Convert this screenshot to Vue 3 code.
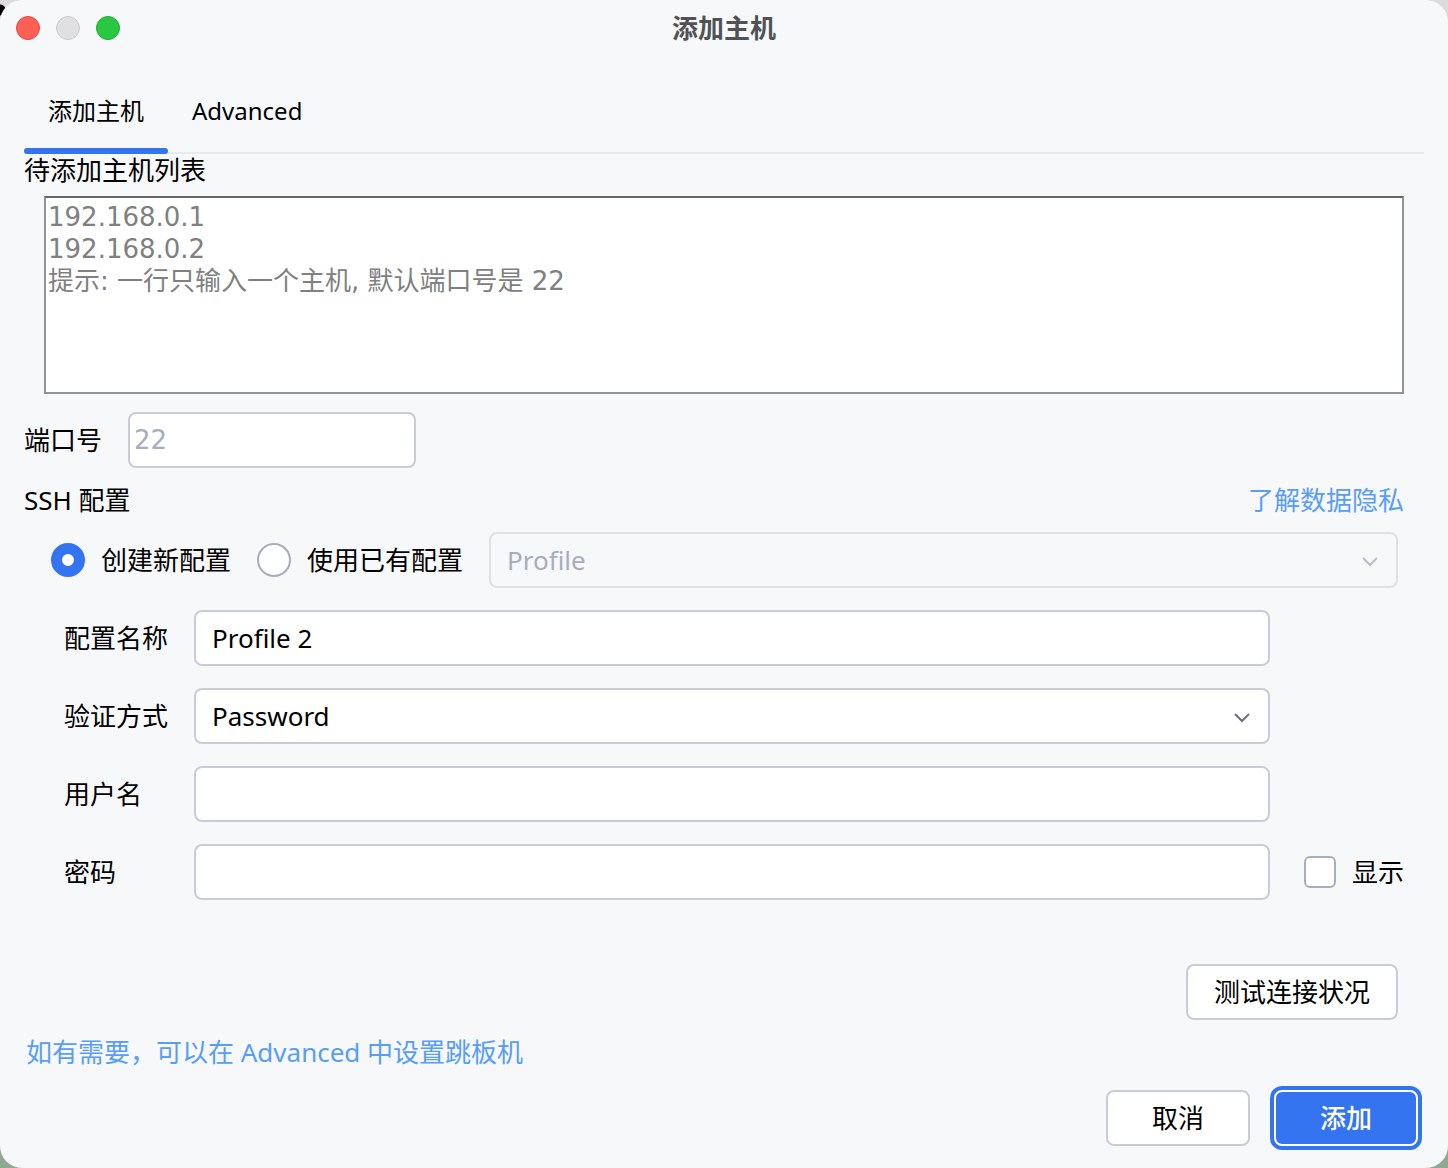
<script setup>
import { ref } from 'vue'

const hosts = ref('')
const hostHint = '192.168.0.1\n192.168.0.2\n提示: 一行只输入一个主机, 默认端口号是 22'
const port = ref('')
const mode = ref('new')
const profileName = ref('Profile 2')
const authMethod = ref('Password')
const username = ref('')
const password = ref('')
const showPassword = ref(false)
</script>

<template>
  <form class="window" @submit.prevent>
    <header class="titlebar">
      <div class="lights">
        <button type="button" class="light close" aria-label="关闭"></button>
        <button type="button" class="light minimize" aria-label="最小化" disabled></button>
        <button type="button" class="light maximize" aria-label="最大化"></button>
      </div>
      <h1 class="title">添加主机</h1>
    </header>

    <main class="content">
      <nav class="tabs" role="tablist">
        <button type="button" class="tab active" role="tab" aria-selected="true">添加主机</button>
        <button type="button" class="tab" role="tab" aria-selected="false">Advanced</button>
      </nav>

      <label class="list-label" for="hosts">待添加主机列表</label>
      <textarea id="hosts" v-model="hosts" class="hosts" :placeholder="hostHint"></textarea>

      <div class="port-row">
        <label for="port">端口号</label>
        <input id="port" v-model="port" class="field port" type="text" placeholder="22" />
      </div>

      <div class="section-row">
        <h2 class="section-title">SSH 配置</h2>
        <a class="link" href="#privacy">了解数据隐私</a>
      </div>

      <div class="mode-row">
        <label class="choice">
          <input v-model="mode" class="radio" type="radio" name="mode" value="new" />
          <span>创建新配置</span>
        </label>
        <label class="choice">
          <input v-model="mode" class="radio" type="radio" name="mode" value="existing" />
          <span>使用已有配置</span>
        </label>
        <div class="select-wrap">
          <select class="field" aria-label="已有配置" :disabled="mode === 'new'">
            <option>Profile</option>
          </select>
          <svg class="chevron" viewBox="0 0 18 12" aria-hidden="true"><path d="M2 2 L9 9 L16 2" /></svg>
        </div>
      </div>

      <div class="fields">
        <div class="row">
          <label for="name">配置名称</label>
          <input id="name" v-model="profileName" class="field" type="text" />
        </div>
        <div class="row">
          <label for="auth">验证方式</label>
          <div class="select-wrap">
            <select id="auth" v-model="authMethod" class="field">
              <option>Password</option>
            </select>
            <svg class="chevron" viewBox="0 0 18 12" aria-hidden="true"><path d="M2 2 L9 9 L16 2" /></svg>
          </div>
        </div>
        <div class="row">
          <label for="user">用户名</label>
          <input id="user" v-model="username" class="field" type="text" />
        </div>
        <div class="row">
          <label for="pass">密码</label>
          <input id="pass" v-model="password" class="field" :type="showPassword ? 'text' : 'password'" />
          <label class="show">
            <input v-model="showPassword" class="checkbox" type="checkbox" />
            <span>显示</span>
          </label>
        </div>
      </div>

      <div class="test-row">
        <button type="button" class="button">测试连接状况</button>
      </div>
      <a class="link jump" href="#advanced">如有需要，可以在 Advanced 中设置跳板机</a>
    </main>

    <footer class="actions">
      <button type="button" class="button">取消</button>
      <button type="submit" class="button primary">添加</button>
    </footer>
  </form>
</template>

<style>
body {
  margin: 0;
  background:
    radial-gradient(circle at 0 10px, #000 5px, transparent 6px),
    linear-gradient(#dcdcde 50%, #8fa892 50%);
}
</style>

<style scoped>
.window {
  box-sizing: border-box;
  min-height: 100vh;
  padding-bottom: 22px;
  display: flex;
  flex-direction: column;
  border-radius: 22px;
  background: #f7f8fa;
  color: #000;
  font: 26px/32px "Noto Sans", "Noto Sans CJK SC", sans-serif;
}
.window *,
.window *::before {
  box-sizing: border-box;
}
button,
input,
select,
textarea {
  margin: 0;
  font: inherit;
  color: inherit;
}
.titlebar {
  display: grid;
  grid-template-columns: 1fr auto 1fr;
  align-items: center;
  height: 56px;
  padding: 0 16px;
}
.lights {
  display: flex;
  gap: 16px;
}
.light {
  width: 24px;
  height: 24px;
  padding: 0;
  border: 1px solid;
  border-radius: 50%;
}
.close {
  background: #ff5f57;
  border-color: #e14942;
}
.minimize {
  background: #e0e0e2;
  border-color: #cbcbcd;
}
.maximize {
  background: #28c840;
  border-color: #1fa834;
}
.title {
  margin: 0;
  font-size: 26px;
  font-weight: 700;
  color: #515254;
}
.content {
  display: flex;
  flex-direction: column;
  padding: 14px 24px 0;
}
.tabs {
  display: flex;
  height: 84px;
  background: linear-gradient(#e9eaee, #e9eaee) bottom / 100% 2px no-repeat;
}
.tab {
  padding: 0 24px 2px;
  border: 0;
  background: none;
  font-size: 24px;
  position: relative;
}
.tab.active::before {
  content: "";
  position: absolute;
  left: 0;
  right: 0;
  bottom: 0;
  height: 6px;
  border-radius: 3px;
  background: #3574f0;
}
.hosts {
  height: 198px;
  margin: 10px 20px 0;
  padding: 3px 2px;
  border: 2px solid #909497;
  border-top-color: #646668;
  border-radius: 0;
  outline: 0;
  resize: none;
  background: #fff;
  font-family: "DejaVu Sans", "Noto Sans CJK SC", sans-serif;
}
.hosts::placeholder {
  color: #808080;
}
.port-row {
  display: flex;
  align-items: center;
  gap: 26px;
  margin-top: 18px;
}
.field {
  width: 100%;
  height: 56px;
  padding: 0 16px;
  border: 2px solid #c9ccd6;
  border-radius: 8px;
  outline: 0;
  background: #fff;
  appearance: none;
}
.field:disabled {
  border-color: #dfe1e5;
  background: #f7f8fa;
  color: #a8adbd;
  opacity: 1;
}
.port {
  width: 288px;
  padding: 0 4px;
  font-family: "DejaVu Sans", sans-serif;
}
.port::placeholder {
  color: #a8adbd;
}
.section-row {
  display: flex;
  justify-content: space-between;
  margin: 16px 20px 0 0;
}
.section-title {
  margin: 0;
  font-size: 26px;
  font-weight: 400;
}
.link {
  color: #589df6;
  text-decoration: none;
}
.mode-row {
  display: flex;
  align-items: center;
  gap: 26px;
  margin: 16px 26px 0 27px;
}
.choice,
.show {
  display: flex;
  align-items: center;
  gap: 16px;
  white-space: nowrap;
}
.radio,
.checkbox {
  appearance: none;
  flex: none;
  border: 2px solid #a8adbd;
  background: #fff;
}
.radio {
  width: 34px;
  height: 34px;
  border-radius: 50%;
}
.radio:checked {
  border: 11px solid #3574f0;
}
.checkbox {
  width: 32px;
  height: 32px;
  border-radius: 6px;
}
.checkbox:checked {
  background: #3574f0;
}
.select-wrap {
  position: relative;
  flex: 1;
}
.chevron {
  position: absolute;
  right: 19px;
  top: 24px;
  width: 18px;
  height: 12px;
  fill: none;
  stroke: #6c707e;
  stroke-width: 2;
  pointer-events: none;
}
.field:disabled + .chevron {
  stroke: #b9bdc9;
}
.fields {
  display: flex;
  flex-direction: column;
  gap: 22px;
  margin: 22px 20px 0 40px;
}
.row {
  display: grid;
  grid-template-columns: 130px 1fr 134px;
  align-items: center;
}
.show {
  padding-left: 34px;
}
.test-row {
  display: flex;
  justify-content: flex-end;
  margin: 64px 26px 0 0;
}
.button {
  min-width: 144px;
  height: 56px;
  padding: 0 26px;
  border: 2px solid #c9ccd6;
  border-radius: 8px;
  background: #fff;
}
.jump {
  align-self: flex-start;
  margin: 16px 2px 0;
}
.actions {
  display: flex;
  justify-content: flex-end;
  gap: 24px;
  margin-top: auto;
  padding: 22px 30px 0;
}
.primary {
  border-color: #fff;
  background: #3574f0;
  color: #fff;
  font-weight: 500;
  box-shadow: 0 0 0 4px #3574f0;
}
</style>
